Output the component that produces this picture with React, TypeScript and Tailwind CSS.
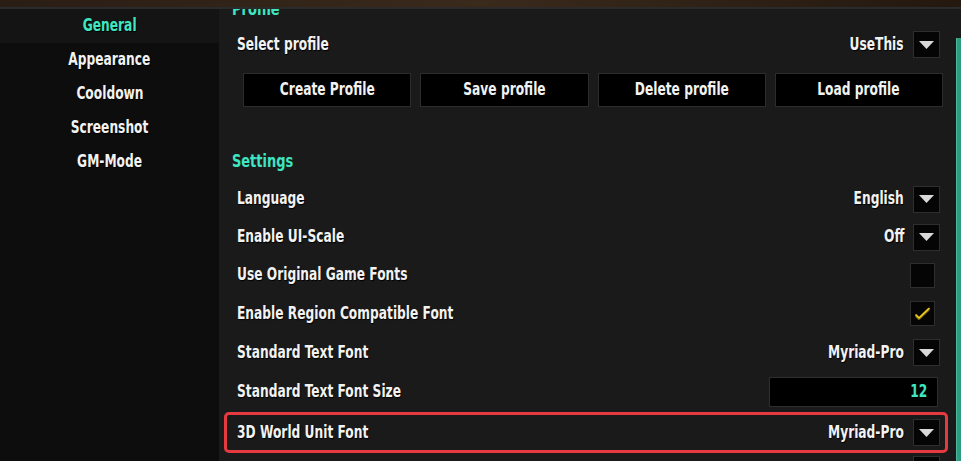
import React from 'react'

const font = { fontFamily: '"DejaVu Sans Condensed", "DejaVu Sans", sans-serif' }

// condensed text, the game font is much narrower than anything installed
function T({ children, origin = 'origin-left' }: { children: React.ReactNode; origin?: string }) {
  return <span className={`inline-block whitespace-nowrap scale-x-[0.8] ${origin}`}>{children}</span>
}

function Arrow() {
  return (
    <span className="flex h-[27px] w-[27px] items-center justify-center border border-[#2e2e2e] bg-[#050505]">
      <svg width="15" height="8" viewBox="0 0 15 8">
        <path d="M0 0 H15 L7.5 8 Z" fill="#d9d9d9" />
      </svg>
    </span>
  )
}

function Dropdown({ value }: { value: string }) {
  return (
    <div className="flex items-center gap-[9px]">
      <span className="text-[17px] font-bold text-[#f2f2f2] [text-shadow:1px_1px_1px_#000]">
        <T origin="origin-right">{value}</T>
      </span>
      <Arrow />
    </div>
  )
}

function Row({ label, h, children }: { label: string; h: string; children: React.ReactNode }) {
  return (
    <div className={`flex items-center justify-between pl-[18px] pr-[15px] ${h}`}>
      <span className="text-[17px] font-bold text-[#f2f2f2] [text-shadow:1px_1px_1px_#000]">
        <T>{label}</T>
      </span>
      {children}
    </div>
  )
}

const navItems = ['General', 'Appearance', 'Cooldown', 'Screenshot', 'GM-Mode']

export default function App() {
  return (
    <div className="flex h-[461px] w-[961px] flex-col overflow-hidden bg-[#1a1a1a]" style={font}>
      {/* top texture */}
      <div className="h-[7px] shrink-0 bg-gradient-to-r from-[#2a1d14] via-[#3a2a1c] to-[#24180f]" />
      <div className="h-[2px] shrink-0 bg-[#2b2b2b]" />

      <div className="flex min-h-0 flex-1">
        {/* sidebar */}
        <aside className="flex w-[219px] shrink-0 flex-col bg-[#0d0d0d]">
          {navItems.map((item, i) => (
            <div
              key={item}
              className={`flex h-[34px] items-center justify-center text-[17px] font-bold [text-shadow:1px_1px_1px_#000] ${
                i === 0 ? 'bg-[#141414] text-[#3ee6c1]' : 'text-[#f2f2f2]'
              }`}
            >
              <T origin="origin-center">{item}</T>
            </div>
          ))}
        </aside>

        {/* main */}
        <main className="relative flex min-w-0 flex-1 flex-col overflow-hidden pr-[6px]">
          <div className="-mt-[11px] flex h-[20px] items-center pl-[13px] text-[18px] font-bold text-[#3ee6c1]">
            <T>Profile</T>
          </div>

          <div className="mt-[13px]">
            <Row label="Select profile" h="h-[27px]">
              <Dropdown value="UseThis" />
            </Row>
          </div>

          <div className="mt-[15px] grid grid-cols-4 gap-[9px] pl-[24px] pr-[12px]">
            {['Create Profile', 'Save profile', 'Delete profile', 'Load profile'].map(b => (
              <button
                key={b}
                className="h-[34px] border border-[#2c2c2c] bg-black text-[17px] font-bold text-[#f2f2f2]"
              >
                <T origin="origin-center">{b}</T>
              </button>
            ))}
          </div>

          <div className="mt-[41px] flex h-[24px] items-center pl-[13px] text-[18px] font-bold text-[#3ee6c1]">
            <T>Settings</T>
          </div>

          <div className="mt-[8px] flex flex-col">
            <Row label="Language" h="h-[38px]">
              <Dropdown value="English" />
            </Row>
            <Row label="Enable UI-Scale" h="h-[38px]">
              <Dropdown value="Off" />
            </Row>
            <Row label="Use Original Game Fonts" h="h-[38px]">
              <span className="mr-[5px] h-[25px] w-[25px] border border-[#2e2e2e] bg-[#050505]" />
            </Row>
            <Row label="Enable Region Compatible Font" h="h-[39px]">
              <span className="mr-[5px] flex h-[25px] w-[25px] items-center justify-center border border-[#2e2e2e] bg-[#050505]">
                <svg width="17" height="15" viewBox="0 0 17 15">
                  <path d="M2 9.5 L5 12.5 L15 3" fill="none" stroke="#7a6510" strokeWidth="3" strokeLinejoin="round" />
                  <path d="M1.5 8.5 L5 12 L15.5 2" fill="none" stroke="#f0d020" strokeWidth="1.6" strokeLinejoin="round" />
                </svg>
              </span>
            </Row>
            <Row label="Standard Text Font" h="h-[39px]">
              <Dropdown value="Myriad-Pro" />
            </Row>
            <Row label="Standard Text Font Size" h="h-[39px]">
              <div className="mr-[2px] flex h-[30px] w-[169px] items-center justify-end border border-[#2e2e2e] bg-black pr-[10px] text-[17px] font-bold text-[#3ee6c1]">
                <T origin="origin-right">12</T>
              </div>
            </Row>
            <div className="ml-[5px] mr-[7px] mt-[1px] flex h-[41px] items-center justify-between rounded-[5px] border-[3px] border-[#e53a3f] pl-[10px] pr-[5px]">
              <span className="text-[17px] font-bold text-[#f2f2f2] [text-shadow:1px_1px_1px_#000]">
                <T>3D World Unit Font</T>
              </span>
              <Dropdown value="Myriad-Pro" />
            </div>
            <div className="mt-[3px] flex justify-end pr-[15px]">
              <span className="h-[27px] w-[27px] border border-[#2e2e2e] bg-[#050505]" />
            </div>
          </div>

          {/* scrollbar */}
          <div className="absolute right-0 top-[29px] bottom-0 w-[5px] border-l border-[#4fb89a] bg-[#2e9c80]" />
        </main>
      </div>
    </div>
  )
}
